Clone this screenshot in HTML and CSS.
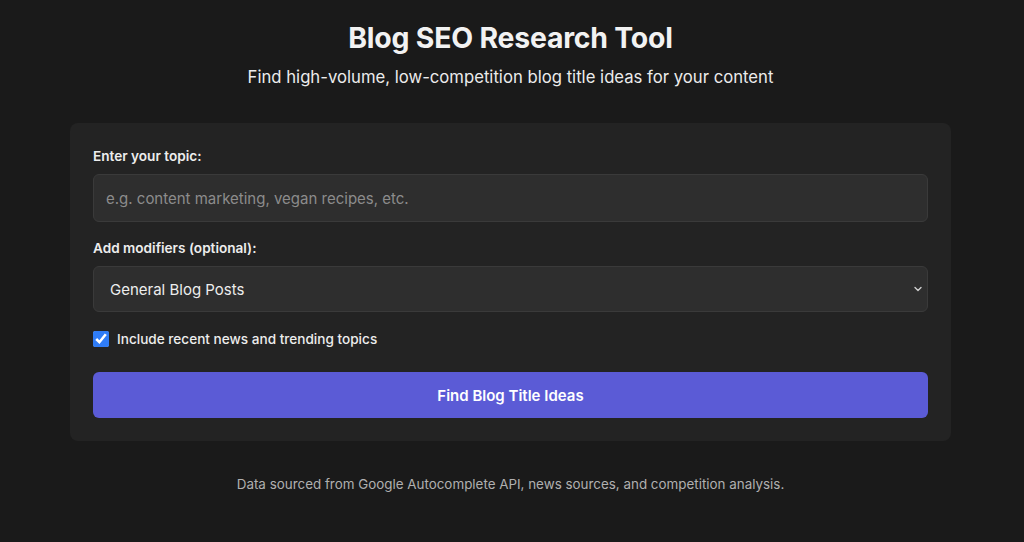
FILE: index.html
```html
<!DOCTYPE html>
<html lang="en">
<head>
    <meta charset="UTF-8">
    <meta name="viewport" content="width=device-width, initial-scale=1.0">
    <title>Blog SEO Research Tool</title>
    <link rel="stylesheet" href="styles.css">
</head>
<body>

    <div class="page">
        <h1>Blog SEO Research Tool</h1>
        <p class="subtitle">Find high-volume, low-competition blog title ideas for your content</p>

        <form class="card">
            <label class="label" for="topic">Enter your topic:</label>
            <input type="text" id="topic" class="field" placeholder="e.g. content marketing, vegan recipes, etc.">

            <label class="label" for="modifier">Add modifiers (optional):</label>
            <div class="select-wrap">
                <select id="modifier" class="field select">
                    <option>General Blog Posts</option>
                    <option>How-To Guides</option>
                    <option>Listicles</option>
                </select>
                <svg class="chevron" width="10" height="10" viewBox="0 0 10 10">
                    <path d="M2 3.5 L5 6.5 L8 3.5" fill="none" stroke="#cfcfcf" stroke-width="1.4" stroke-linecap="round" stroke-linejoin="round"/>
                </svg>
            </div>

            <label class="check">
                <input type="checkbox" checked>
                <span>Include recent news and trending topics</span>
            </label>

            <button type="button" class="submit">Find Blog Title Ideas</button>
        </form>

        <p class="footer">Data sourced from Google Autocomplete API, news sources, and competition analysis.</p>
    </div>

</body>
</html>
```

FILE: styles.css
```css
body {
    margin: 0;
    padding-right: 3px;
    background: #1a1a1a;
    color: #f2f2f2;
    font-family: Inter, "Noto Sans", sans-serif;
}
.page {
    width: 881px;
    margin: 0 auto;
    padding-top: 21px;
    text-align: center;
}
h1 {
    font-size: 28.4px;
    line-height: 34px;
    font-weight: 700;
    margin: 0;
    letter-spacing: -0.2px;
}
.subtitle {
    font-size: 16.7px;
    line-height: 24px;
    margin: 10px 0 0;
    color: #ececec;
}
.card {
    margin-top: 34px;
    background: #232323;
    border-radius: 8px;
    padding: 23px;
    text-align: left;
    display: flex;
    flex-direction: column;
}
.label {
    font-size: 13.6px;
    line-height: 20px;
    font-weight: 600;
    color: #ededed;
    margin-bottom: 8px;
}
.field {
    box-sizing: border-box;
    width: 100%;
    background: #2e2e2e;
    border: 1px solid #3a3a3a;
    border-radius: 6px;
    color: #ededed;
    font-family: inherit;
    font-size: 15px;
    outline: none;
}
input.field {
    height: 48px;
    padding: 0 12px;
    margin-bottom: 16px;
}
input.field::placeholder {
    color: #8c8c8c;
}
.select-wrap {
    position: relative;
}
.select {
    height: 46px;
    padding: 0 16px;
    appearance: none;
    -webkit-appearance: none;
}
.chevron {
    position: absolute;
    right: 5px;
    top: 18px;
}
.check {
    display: flex;
    align-items: center;
    gap: 8px;
    margin-top: 17px;
    font-size: 13.6px;
    line-height: 20px;
    font-weight: 500;
    color: #ededed;
}
.check input {
    width: 16px;
    height: 16px;
    margin: 0;
    accent-color: #2f7cf6;
}
.submit {
    margin-top: 23px;
    height: 46px;
    border: none;
    border-radius: 6px;
    background: #5b5bd6;
    color: #fff;
    font-family: inherit;
    font-size: 15px;
    font-weight: 600;
    cursor: pointer;
}
.footer {
    margin: 33px 0 0;
    font-size: 13.4px;
    line-height: 20px;
    color: #b0b0b0;
}
```
